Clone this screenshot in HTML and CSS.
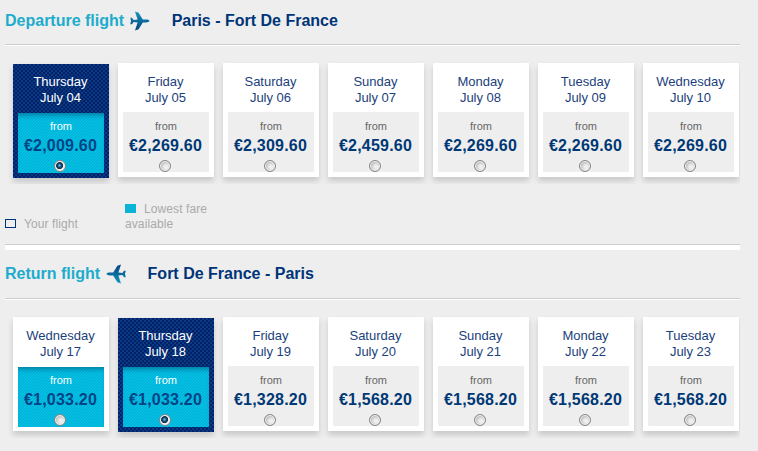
FILE: index.html
```html
<!DOCTYPE html>
<html lang="en">
<head>
<meta charset="UTF-8">
<meta name="viewport" content="width=device-width, initial-scale=1.0">
<title>Select your flights</title>
<link rel="stylesheet" href="styles.css">
</head>
<body>
<svg width="0" height="0" class="defs">
    <defs>
        <linearGradient id="plane-fill" x1="0" y1="0" x2="0" y2="1">
            <stop offset="0" stop-color="#1798c0"/>
            <stop offset="0.5" stop-color="#0a6b9f"/>
            <stop offset="1" stop-color="#05437d"/>
        </linearGradient>
        <linearGradient id="plane-fill-back" x1="0" y1="0" x2="0" y2="1">
            <stop offset="0" stop-color="#05437d"/>
            <stop offset="0.5" stop-color="#0a6b9f"/>
            <stop offset="1" stop-color="#1798c0"/>
        </linearGradient>
    </defs>
</svg>

<div class="flights">
    <!-- Departure -->
    <div class="flight-header">
        <h2>Departure flight</h2>
        <svg class="plane" width="20" height="20" viewBox="0 0 20 20"><path fill="url(#plane-fill)" d="M19.5 10C19.3 10.9 17.5 11.4 16 11.4H12.8L8.6 18.2L5 19.4L7.6 11.4L3.6 10.9L2 13.2H0.3L1 10L0.3 6.8H2L3.6 9.1L7.6 8.6L5 0.6L8.6 1.8L12.8 8.6H16C17.5 8.6 19.3 9.1 19.5 10Z"/></svg>
        <h3>Paris - Fort De France</h3>
    </div>
    <div class="days">
        <label class="day lowest selected">
            <span class="date">Thursday<br>July 04</span>
            <span class="fare"><small>from</small><b>€2,009.60</b><input type="radio" name="departure" checked></span>
        </label>
        <label class="day">
            <span class="date">Friday<br>July 05</span>
            <span class="fare"><small>from</small><b>€2,269.60</b><input type="radio" name="departure"></span>
        </label>
        <label class="day">
            <span class="date">Saturday<br>July 06</span>
            <span class="fare"><small>from</small><b>€2,309.60</b><input type="radio" name="departure"></span>
        </label>
        <label class="day">
            <span class="date">Sunday<br>July 07</span>
            <span class="fare"><small>from</small><b>€2,459.60</b><input type="radio" name="departure"></span>
        </label>
        <label class="day">
            <span class="date">Monday<br>July 08</span>
            <span class="fare"><small>from</small><b>€2,269.60</b><input type="radio" name="departure"></span>
        </label>
        <label class="day">
            <span class="date">Tuesday<br>July 09</span>
            <span class="fare"><small>from</small><b>€2,269.60</b><input type="radio" name="departure"></span>
        </label>
        <label class="day">
            <span class="date">Wednesday<br>July 10</span>
            <span class="fare"><small>from</small><b>€2,269.60</b><input type="radio" name="departure"></span>
        </label>
    </div>
    <div class="legend">
        <div class="legend-item"><i class="box"></i>Your flight</div>
        <div class="legend-item"><i class="box box-lowest"></i>Lowest fare available</div>
    </div>

    <!-- Return -->
    <div class="flight-header return-header">
        <h2>Return flight</h2>
        <svg class="plane" width="20" height="20" viewBox="0 0 20 20"><path fill="url(#plane-fill-back)" d="M0.5 10C0.7 10.9 2.5 11.4 4 11.4H7.2L11.4 18.2L15 19.4L12.4 11.4L16.4 10.9L18 13.2H19.7L19 10L19.7 6.8H18L16.4 9.1L12.4 8.6L15 0.6L11.4 1.8L7.2 8.6H4C2.5 8.6 0.7 9.1 0.5 10Z"/></svg>
        <h3>Fort De France - Paris</h3>
    </div>
    <div class="days">
        <label class="day lowest">
            <span class="date">Wednesday<br>July 17</span>
            <span class="fare"><small>from</small><b>€1,033.20</b><input type="radio" name="return"></span>
        </label>
        <label class="day lowest selected">
            <span class="date">Thursday<br>July 18</span>
            <span class="fare"><small>from</small><b>€1,033.20</b><input type="radio" name="return" checked></span>
        </label>
        <label class="day">
            <span class="date">Friday<br>July 19</span>
            <span class="fare"><small>from</small><b>€1,328.20</b><input type="radio" name="return"></span>
        </label>
        <label class="day">
            <span class="date">Saturday<br>July 20</span>
            <span class="fare"><small>from</small><b>€1,568.20</b><input type="radio" name="return"></span>
        </label>
        <label class="day">
            <span class="date">Sunday<br>July 21</span>
            <span class="fare"><small>from</small><b>€1,568.20</b><input type="radio" name="return"></span>
        </label>
        <label class="day">
            <span class="date">Monday<br>July 22</span>
            <span class="fare"><small>from</small><b>€1,568.20</b><input type="radio" name="return"></span>
        </label>
        <label class="day">
            <span class="date">Tuesday<br>July 23</span>
            <span class="fare"><small>from</small><b>€1,568.20</b><input type="radio" name="return"></span>
        </label>
    </div>
</div>
</body>
</html>
```
FILE: styles.css
```css
body {
    font-family: Arial, "Liberation Sans", sans-serif;
    margin: 0;
    background-color: #eee;
    overflow: hidden;
}
.defs {
    display: block;
}
.flights {
    width: 735px;
    margin-left: 5px;
}
.flight-header {
    display: flex;
    align-items: center;
    box-sizing: border-box;
    height: 46px;
    padding-bottom: 4px;
    border-bottom: 1px solid #fff;
    box-shadow: inset 0 -1px #ccc;
}
.flight-header h2,
.flight-header h3 {
    margin: 0;
    font-size: 16px;
    line-height: 20px;
    white-space: nowrap;
}
.flight-header h2 {
    color: #1caccd;
}
.flight-header h3 {
    color: #003478;
}
.plane {
    margin: 0 22px 0 5.5px;
}
.return-header {
    height: 50px;
    padding-bottom: 2px;
}
.days {
    display: flex;
    gap: 9px;
    height: 121px;
    padding: 17px 0 0 8px;
    overflow: hidden;
}
.day {
    box-sizing: border-box;
    width: 96px;
    height: 114px;
    flex: none;
    padding: 11px 5px 0;
    background-color: #fff;
    box-shadow: 0 4px 6px rgba(0, 0, 0, 0.16);
    text-align: center;
}
.date {
    display: block;
    height: 38px;
    padding-right: 1px;
    font-size: 13px;
    line-height: 16px;
    color: #1b3f7c;
}
.fare {
    display: flex;
    flex-direction: column;
    align-items: center;
    box-sizing: border-box;
    height: 60px;
    padding-right: 2px;
    background-color: #eee;
}
.fare small {
    padding: 8px 0 0 2px;
    font-size: 11px;
    line-height: 13px;
    color: #666;
}
.fare b {
    margin: 4px 0 0 1px;
    font-size: 16px;
    line-height: 18px;
    letter-spacing: 0.2px;
    color: #003876;
}
.fare input {
    appearance: none;
    box-sizing: border-box;
    width: 12px;
    height: 12px;
    margin: 5px 0 0;
    border: 1px solid #858585;
    border-radius: 50%;
    background: radial-gradient(circle at 60% 60%, #eee 20%, #bbb 65%);
    box-shadow: inset 0 0 0 1px #f4f4f4;
}
.fare input:checked {
    background: radial-gradient(circle at 45% 45%, #6fc5e8 0, #144a70 25%, #0b2e50 42%, #eee 50%);
}
/* cheapest fares and the chosen day */
.lowest .date {
    height: 39px;
}
.lowest .fare {
    background: linear-gradient(135deg, #00b4da 25%, #08c4e6 25%, #08c4e6 50%, #00b4da 50%, #00b4da 75%, #08c4e6 75%) 0 0 / 3px 3px;
    box-shadow: inset 0 5px 5px -3px rgba(0, 60, 100, 0.5);
}
.lowest .fare small {
    padding-top: 7px;
    color: #fff;
}
.lowest .fare b {
    color: #004488;
}
.selected {
    margin-top: 1px;
    padding-top: 10px;
    background: conic-gradient(#00206a 25%, #0a3a80 0 50%, #00206a 0 75%, #0a3a80 0) 0 0 / 4px 4px;
}
.selected .date {
    color: #fff;
}
.legend {
    display: flex;
    align-items: flex-end;
    height: 60px;
    padding-bottom: 12px;
    margin-top: 1px;
    box-sizing: border-box;
    border-bottom: 1px solid #ccc;
    box-shadow: 0 5px #fff;
    margin-bottom: 5px;
    font-size: 12px;
    line-height: 15px;
    letter-spacing: 0.1px;
    color: #aaa;
}
.legend-item {
    width: 95px;
    margin-right: 25px;
}
.box {
    display: inline-block;
    box-sizing: border-box;
    width: 11px;
    height: 9px;
    margin-right: 8px;
    border: 1px solid #003478;
}
.box-lowest {
    border-color: #0bb4d6;
    background-color: #0bb4d6;
}
```
